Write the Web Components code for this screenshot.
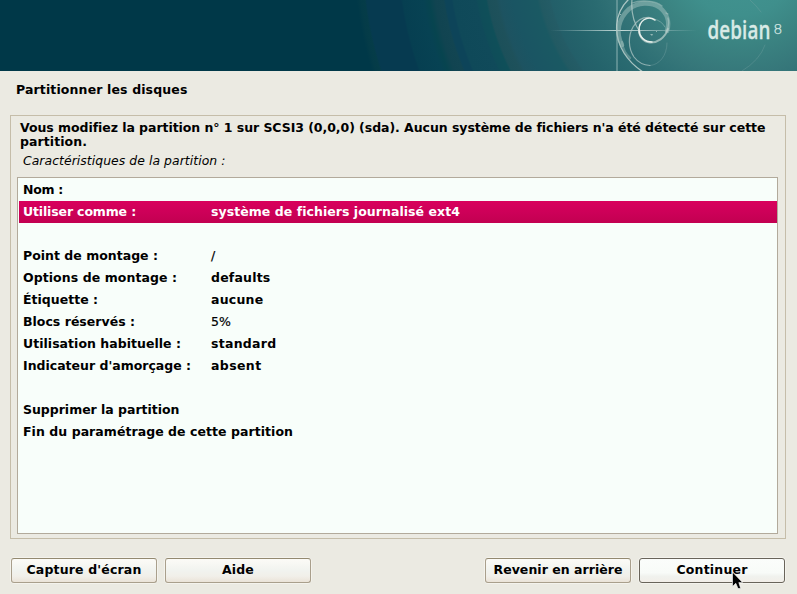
<!DOCTYPE html>
<html lang="fr">
<head>
<meta charset="utf-8">
<title>Partitionner les disques</title>
<style>
html,body{margin:0;height:100%;overflow:hidden}
body{background:#ebeae2;font:bold 12.5px/14px "DejaVu Sans",sans-serif;color:#000}
</style>
</head>
<body>
<installer-screen>
  <brand-banner slot="banner"></brand-banner>
  <text-run slot="title" width="171.500">Partitionner les disques</text-run>
  <option-panel slot="panel">
    <text-run slot="message" width="744.500">Vous modifiez la partition n° 1 sur SCSI3 (0,0,0) (sda). Aucun système de fichiers n'a été détecté sur cette</text-run>
    <text-run slot="message" width="67">partition.</text-run>
    <text-run slot="caption" width="202.500">Caractéristiques de la partition :</text-run>
    <option-row><text-run width="40">Nom :</text-run></option-row>
    <option-row selected><text-run width="113">Utiliser comme :</text-run><text-run slot="value" width="248.500">système de fichiers journalisé ext4</text-run></option-row>
    <option-row></option-row>
    <option-row plain><text-run width="135">Point de montage :</text-run><text-run slot="value">/</text-run></option-row>
    <option-row><text-run width="154">Options de montage :</text-run><text-run slot="value" width="59.500">defaults</text-run></option-row>
    <option-row><text-run width="75">Étiquette :</text-run><text-run slot="value" width="52.500">aucune</text-run></option-row>
    <option-row plain><text-run width="112">Blocs réservés :</text-run><text-run slot="value">5%</text-run></option-row>
    <option-row><text-run width="158">Utilisation habituelle :</text-run><text-run slot="value" width="65.500">standard</text-run></option-row>
    <option-row><text-run width="168">Indicateur d'amorçage :</text-run><text-run slot="value" width="50.500">absent</text-run></option-row>
    <option-row></option-row>
    <option-row><text-run width="156.500">Supprimer la partition</text-run></option-row>
    <option-row><text-run width="270">Fin du paramétrage de cette partition</text-run></option-row>
  </option-panel>
  <push-button slot="left"><text-run width="115">Capture d'écran</text-run></push-button>
  <push-button slot="left"><text-run width="32">Aide</text-run></push-button>
  <push-button slot="right"><text-run width="129">Revenir en arrière</text-run></push-button>
  <push-button slot="right" focused><text-run width="71">Continuer</text-run></push-button>
</installer-screen>
<mouse-pointer></mouse-pointer>
<script>
const define = (name, html, connected) => {
  const template = document.createElement('template');
  template.innerHTML = html;
  customElements.define(name, class extends HTMLElement {
    constructor() {
      super();
      this.attachShadow({mode: 'open'}).append(template.content.cloneNode(true));
    }
    connectedCallback() { if (connected) connected(this); }
  });
};

define('installer-screen', `
<style>
:host{display:flex;flex-direction:column;width:797px;height:594px}
h1{font:inherit;margin:0;padding:12px 16px 0;height:20px}
footer{display:flex;justify-content:space-between;padding:19px 12px 0 11px}
div{display:flex;gap:8px}
</style>
<slot name="banner"></slot>
<h1><slot name="title"></slot></h1>
<slot name="panel"></slot>
<footer><div><slot name="left"></slot></div><div><slot name="right"></slot></div></footer>`);

define('brand-banner', `
<style>:host{display:block;height:71px}svg{display:block}</style>
<svg width="797" height="71" viewBox="0 0 797 71">
<defs>
<radialGradient id="sky" gradientUnits="userSpaceOnUse" cx="740" cy="-45" r="400">
<stop offset="0" stop-color="#439692"/><stop offset=".15" stop-color="#3f8f8c"/><stop offset=".22" stop-color="#3b8482"/><stop offset=".3" stop-color="#36777a"/>
<stop offset=".38" stop-color="#2a6b71"/><stop offset=".45" stop-color="#24636b"/><stop offset=".485" stop-color="#235f69"/>
<stop offset=".49" stop-color="#245c66"/><stop offset=".512" stop-color="#225a63"/><stop offset=".52" stop-color="#1a5963"/>
<stop offset=".58" stop-color="#1a5563"/><stop offset=".61" stop-color="#1d5361"/><stop offset=".62" stop-color="#1e515b"/><stop offset=".64" stop-color="#1c505a"/>
<stop offset=".645" stop-color="#0f4f59"/><stop offset=".665" stop-color="#0f4d59"/><stop offset=".67" stop-color="#104a5a"/><stop offset=".725" stop-color="#0f4959"/>
<stop offset=".73" stop-color="#0d4459"/><stop offset=".745" stop-color="#0d4459"/><stop offset=".75" stop-color="#124552"/><stop offset=".77" stop-color="#114451"/>
<stop offset=".785" stop-color="#07444f"/><stop offset=".8" stop-color="#074253"/><stop offset=".85" stop-color="#063f51"/><stop offset=".855" stop-color="#063a50"/>
<stop offset=".94" stop-color="#063a50"/><stop offset=".945" stop-color="#053c48"/><stop offset=".955" stop-color="#043b48"/><stop offset=".965" stop-color="#003848"/>
</radialGradient>
<linearGradient id="ray" gradientUnits="userSpaceOnUse" x1="550" y1="0" x2="697" y2="0">
<stop offset="0" stop-color="#c5dcda" stop-opacity="0"/><stop offset=".48" stop-color="#d8e8e5" stop-opacity=".9"/><stop offset="1" stop-color="#c5dcda" stop-opacity="0"/>
</linearGradient>
</defs>
<rect width="797" height="71" fill="url(#sky)"/>
<path d="M616 0h2v71h-2z" fill="#8db3b3" opacity=".5"/>
<path d="M550 30.5H697" stroke="url(#ray)"/>
<g fill="none" stroke-linecap="round">
<path d="M750 0Q756 5 761 12M765 45Q760 60 742 71" stroke="#80aaa9" stroke-opacity=".3"/>
<path d="M629 -1C614 13 613 35 624 53Q631 64 643 72" stroke="#bfd3d0" stroke-opacity=".85" stroke-width="1.3"/>
<path d="M622 45C615 32 619 18 629 9C638 2 651 2 659 7C667 13 670 22 667 31" stroke="#9bbdba" stroke-opacity=".55" stroke-width="4.5"/>
<path d="M632 3C640 0 655 0 662 6M666 13l2 1M668 18Q670 25 666 32" stroke="#c0d5d0" stroke-opacity=".45" stroke-width="1.3"/>
<path d="M632 -1C631 10 633 22 640 32" stroke="#c0d5d2" stroke-opacity=".7" stroke-width="1.2"/>
<path d="M668 29C665 38 657 43 650 42.500C643 42 639 36 639 30" stroke="#b5cdc9" stroke-opacity=".75" stroke-width="2"/>
<path d="M655 20C647 15 639 21 639 30C639 37 645 42 652 42" stroke="#e8f0eb" stroke-width="1.5"/>
<path d="M654 19Q662 21 665 27" stroke="#a9c7c4" stroke-opacity=".45"/>
<path d="M650 17.500C643 17 637 20 633 27C628 36 628 48 634 57Q640 65 650 65.500" stroke="#b5cbc9" stroke-opacity=".7" stroke-width="1.2"/>
<path d="M650 65.500C659 65 667 56 667 43" stroke="#8eb3b2" stroke-opacity=".3"/>
<path d="M622 42Q623 52 630 58" stroke="#a6c3bf" stroke-opacity=".4" stroke-width="2.500"/>
</g>
<path d="M650 34l3 0-1 2zM656 31h1v1h-1zM620 14h1v1h-1z" fill="#bed4cf" opacity=".7"/>
<g transform="translate(707.5 39) scale(.74 1)"><text font-family="Open Sans" font-weight="600" font-size="25.5" textLength="85" fill="#d8eae6" stroke="#d8eae6" stroke-width=".3">debian</text></g>
<text x="773.2" y="34" font-family="DejaVu Sans" font-weight="200" font-size="14.5" fill="#d8e8e5" stroke="#d8e8e5" stroke-width=".25">8</text>
</svg>`);

define('option-panel', `
<style>
:host{display:flex;flex-direction:column;box-sizing:border-box;margin:12px 11px 0 10px;width:776px;height:424px;border:1px solid #c5bda9;padding:5px 7px 4px 6px}
.message{display:flex;flex-direction:column;align-items:flex-start;padding:0 3px;height:28px}
.caption{font-weight:normal;font-style:oblique;font-size:12.4px;padding:5px 6px 0;height:28px;box-sizing:border-box}
.list{box-sizing:border-box;flex:1;border:1px solid #b2aa9b;background:#f8fefa;padding:1px 0 0 1px}
</style>
<div class="message"><slot name="message"></slot></div>
<div class="caption"><slot name="caption"></slot></div>
<div class="list"><slot></slot></div>`);

define('option-row', `
<style>
:host{display:grid;grid-template-columns:188px 1fr;align-items:center;height:22px;padding-left:4px;white-space:nowrap}
:host([selected]){background:linear-gradient(#d9005c,#cc0058 55%,#c20050);color:#fff}
:host([plain]) .value{font-weight:normal;-webkit-text-stroke:.2px #000}
</style>
<span><slot></slot></span><span class="value"><slot name="value"></slot></span>`);

define('push-button', `
<style>
:host{display:block;width:146px}
button{display:block;box-sizing:border-box;width:148px;height:27px;margin:-1px;border:1px solid #f4f3ed;border-radius:4px;padding:0;background:none;font:inherit;color:inherit}
span{display:block;box-sizing:border-box;height:25px;border:1px solid #a99f8c;border-top-color:#938970;border-radius:3px;line-height:22px;background:linear-gradient(#fcfbf7,#f1f3ef 50%,#f1efe9 75%,#eae3d8)}
:host([focused]) span{border-color:#69645a;background:linear-gradient(#fbfdfb,#f8fbf8 60%,#f0f2ee 75%,#f2eee8)}
</style>
<button><span><slot></slot></span></button>`);

define('mouse-pointer', `
<style>:host{position:absolute;left:732px;top:571px}svg{display:block}</style>
<svg width="12" height="19" viewBox="0 0 12 19"><path d="M.5 1V15.500L3.800 12.300L6 17.500H8.700L6.800 11.500H10.500Z" fill="#000" stroke="#fff" stroke-width=".6"/></svg>`);

// Spreads its text evenly over the advance width given in the attribute.
define('text-run', `
<style>:host{display:inline-block;white-space:nowrap}</style><slot></slot>`, el => {
  const width = parseFloat(el.getAttribute('width'));
  if (!width) return;
  const natural = el.getBoundingClientRect().width;
  el.style.letterSpacing = (width - natural) / el.textContent.length + 'px';
});
</script>
</body>
</html>
